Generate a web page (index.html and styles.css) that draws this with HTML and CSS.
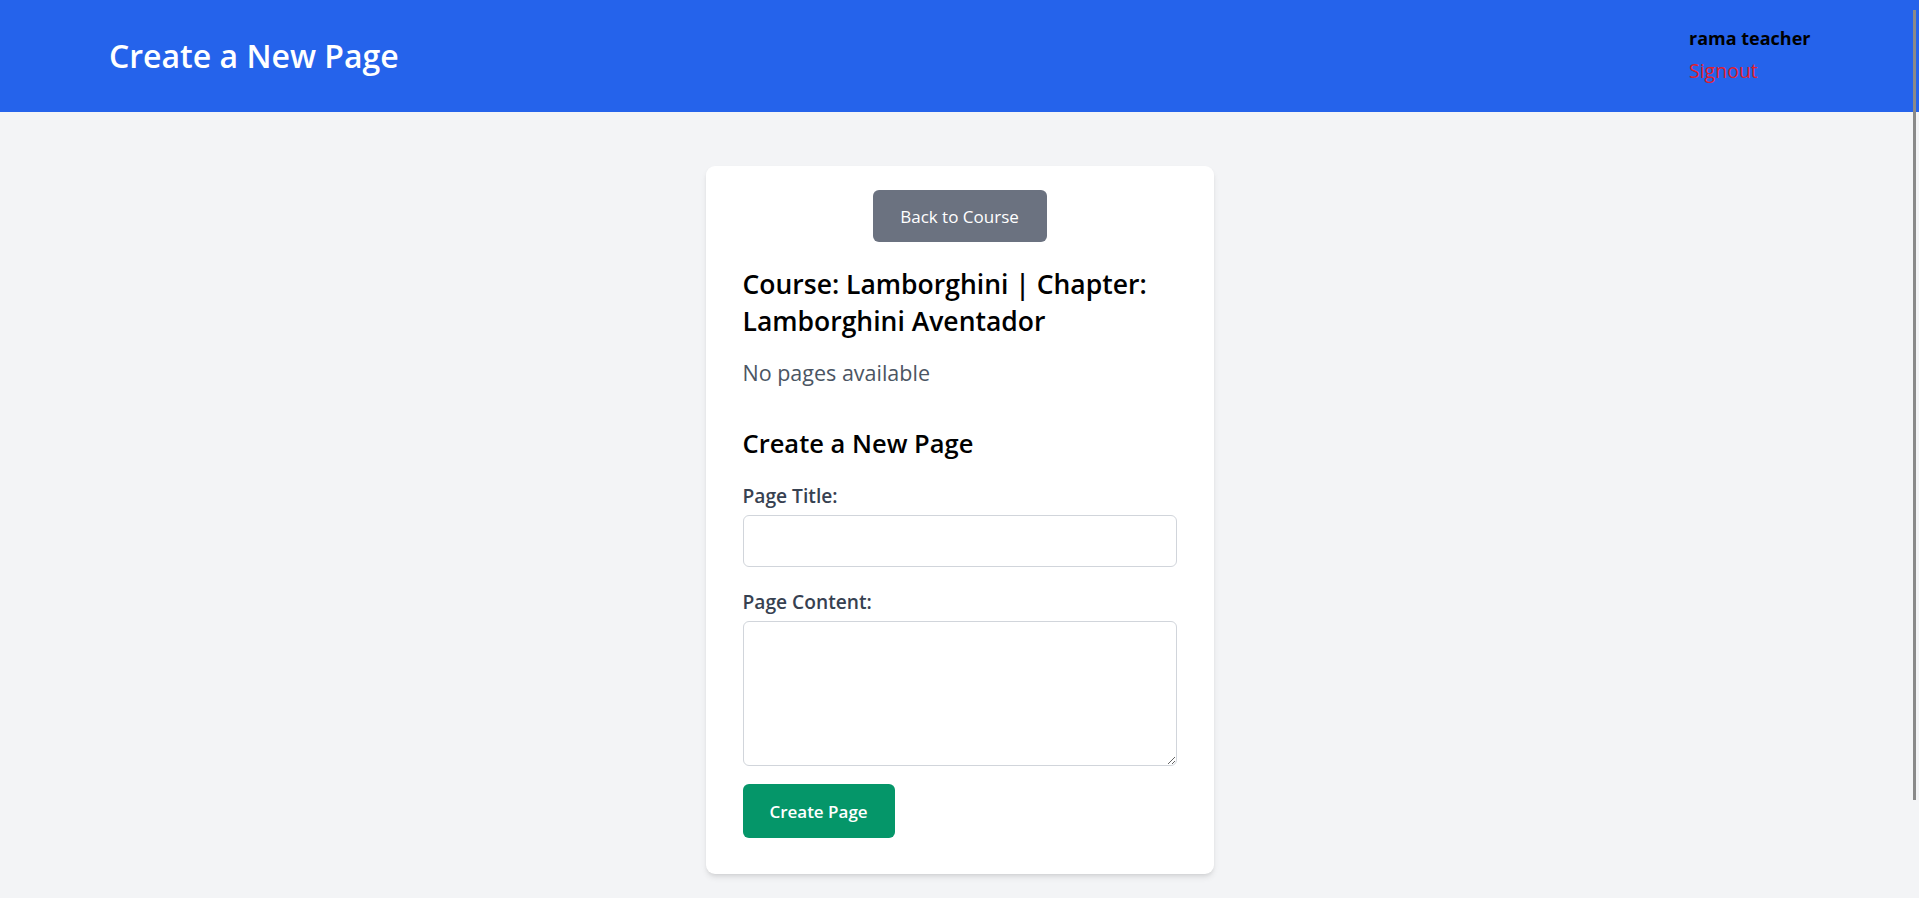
FILE: index.html
```html
<!DOCTYPE html>
<html lang="en">
<head>
<meta charset="utf-8">
<title>Create a New Page</title>
<link rel="stylesheet" href="styles.css">
</head>
<body>
<header class="topbar">
  <h1 class="topbar-title">Create a New Page</h1>
  <div class="user-box">
    <div class="user-name">rama teacher</div>
    <a class="signout" href="#">Signout</a>
  </div>
</header>
<main class="page">
  <section class="card">
    <div class="back-row">
      <button class="btn-back" type="button">Back to Course</button>
    </div>
    <h2 class="course-heading">Course: Lamborghini | Chapter: Lamborghini Aventador</h2>
    <p class="empty-note">No pages available</p>
    <h3 class="form-heading">Create a New Page</h3>
    <form class="page-form">
      <label class="field-label" for="title">Page Title:</label>
      <input class="field-input" id="title" type="text">
      <label class="field-label field-label-2" for="content">Page Content:</label>
      <textarea class="field-textarea" id="content"></textarea>
      <button class="btn-create" type="button">Create Page</button>
    </form>
  </section>
</main>
<div class="fake-scrollbar"></div>
</body>
</html>
```
FILE: styles.css
```css
* { box-sizing: border-box; }
html, body { margin: 0; padding: 0; }
body {
  background: #f3f4f6;
  font-family: "Open Sans", "Noto Sans", sans-serif;
  color: #000;
  height: 898px;
  overflow: hidden;
}
.topbar {
  height: 112px;
  background: #2563eb;
  display: flex;
  align-items: center;
  justify-content: space-between;
  padding: 0 108px 0 109px;
}
.topbar-title {
  margin: 0;
  color: #fff;
  font-size: 32px;
  font-weight: 600;
  line-height: 40px;
}
.user-box {
  width: 122px;
  display: flex;
  flex-direction: column;
  margin-top: -4px;
}
.user-name {
  font-size: 18px;
  font-weight: 700;
  line-height: 28px;
  color: #000;
  white-space: nowrap;
}
.signout {
  margin-top: 5px;
  font-size: 19.5px;
  line-height: 28px;
  color: #e0202e;
  text-decoration: none;
}
.page {
  display: flex;
  justify-content: center;
  padding-top: 54px;
}
.card {
  width: 508px;
  background: #fff;
  border-radius: 9px;
  box-shadow: 0 4px 6px -1px rgba(0,0,0,0.1), 0 2px 4px -2px rgba(0,0,0,0.1);
  padding: 24px 37px 36px;
}
.back-row { display: flex; justify-content: center; }
.btn-back {
  width: 174px;
  height: 52px;
  border: none;
  border-radius: 6px;
  background: #6b7280;
  color: #fff;
  font-family: inherit;
  font-size: 17px;
  padding: 0;
}
.course-heading {
  margin: 24px 0 0;
  font-size: 26.5px;
  font-weight: 600;
  line-height: 37px;
}
.empty-note {
  margin: 19px 0 0;
  font-size: 21.5px;
  line-height: 28px;
  color: #4b5563;
}
.form-heading {
  margin: 40px 0 0;
  font-size: 25.5px;
  font-weight: 600;
  line-height: 32px;
}
.page-form { display: flex; flex-direction: column; }
.field-label {
  margin-top: 25px;
  font-size: 19.2px;
  font-weight: 600;
  line-height: 24px;
  color: #374151;
}
.field-label-2 { margin-top: 23px; }
.field-input {
  margin-top: 7px;
  height: 52px;
  border: 1px solid #d1d5db;
  border-radius: 6px;
  background: #fff;
}
.field-textarea {
  margin-top: 7px;
  height: 145px;
  border: 1px solid #d1d5db;
  border-radius: 6px;
  background: #fff;
  resize: vertical;
}
.btn-create {
  margin-top: 18px;
  align-self: flex-start;
  width: 152px;
  height: 54px;
  border: none;
  border-radius: 6px;
  background: #059669;
  color: #fff;
  font-family: inherit;
  font-size: 17px;
  font-weight: 600;
  padding: 0;
}
.fake-scrollbar {
  position: fixed;
  top: 10px;
  right: 3px;
  width: 3px;
  height: 790px;
  background: #8a8a8a;
}
```
